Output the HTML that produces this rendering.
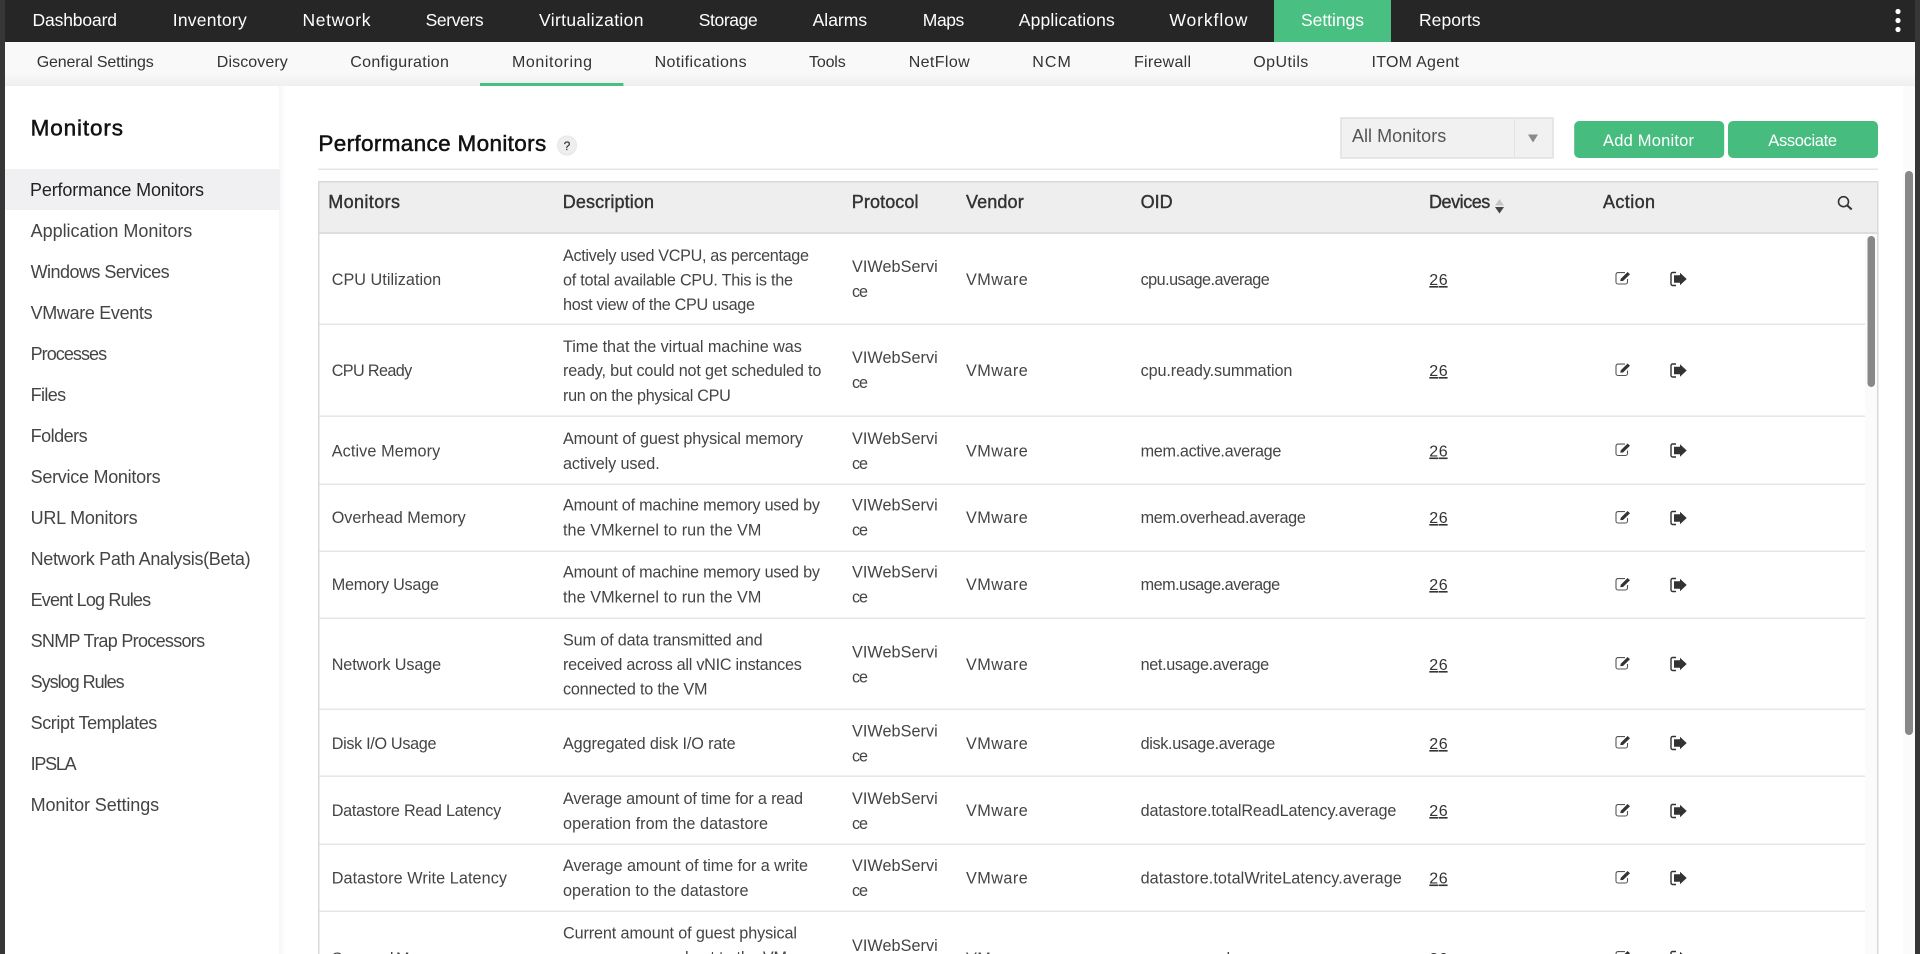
<!DOCTYPE html>
<html lang="en">
<head>
<meta charset="utf-8">
<title>Performance Monitors</title>
<style>
html,body{margin:0;padding:0;width:1920px;height:954px;overflow:hidden;background:#fff}
svg{display:block;position:absolute;left:0;top:0}
text{font-family:"Liberation Sans",sans-serif;white-space:pre}
.n{font-size:17.5px;fill:#fff}
.s{font-size:16px;fill:#333}
.m{font-size:18px;fill:#444}
.h{font-size:22.5px;fill:#111;stroke:#111;stroke-width:.5px}
.th{font-size:18px;fill:#333;stroke:#333;stroke-width:.4px}
.t{font-size:16.2px;fill:#444}
.d{font-size:16px;fill:#333}
.b{font-size:16.5px;fill:#fff}
</style>
</head>
<body>
<svg width="1920" height="954" viewBox="0 0 1920 954" xmlns="http://www.w3.org/2000/svg">
<defs>
<linearGradient id="sg" x1="0" y1="0" x2="0" y2="1"><stop offset="0" stop-color="#f9f9f9"/><stop offset=".7" stop-color="#f9f9f9"/><stop offset="1" stop-color="#efefef"/></linearGradient>
<linearGradient id="sd" x1="0" y1="0" x2="1" y2="0"><stop offset="0" stop-color="#f6f6f6"/><stop offset="1" stop-color="#fff"/></linearGradient>
<g id="ed">
<path d="M10 1.6H3A2 2 0 0 0 1 3.6V11a2 2 0 0 0 2 2h7.5a2 2 0 0 0 2-2V8" fill="none" stroke="#555" stroke-width="1.1"/>
<path d="M5.2 10.1L5.8 7.8 12.6 1 15 3.2 8 10z" fill="#333"/>
</g>
<g id="ar">
<path d="M6 1H2.6A1.6 1.6 0 0 0 1 2.6v9.8A1.6 1.6 0 0 0 2.6 14H6" fill="none" stroke="#333" stroke-width="1.4"/>
<path d="M4 3.8h6V1.2l6.7 6.3-6.7 6.3v-2.6H4z" fill="#333"/>
</g>
</defs>

<!-- window frame -->
<rect x="0" y="0" width="1920" height="954" fill="#fff"/>
<rect x="0" y="0" width="5" height="954" fill="#363636"/>
<rect x="1915" y="0" width="5" height="954" fill="#363636"/>
<!-- top nav -->
<rect x="5" y="0" width="1910" height="42" fill="#262626"/>
<rect x="1274" y="0" width="117" height="42" fill="#4abf82"/>
<text class="n" x="32.5" y="26" textLength="84.5">Dashboard</text>
<text class="n" x="172.7" y="26" textLength="74">Inventory</text>
<text class="n" x="302.5" y="26" textLength="68">Network</text>
<text class="n" x="425.6" y="26" textLength="58">Servers</text>
<text class="n" x="539" y="26" textLength="104.5">Virtualization</text>
<text class="n" x="698.7" y="26" textLength="59">Storage</text>
<text class="n" x="812.6" y="26" textLength="54.5">Alarms</text>
<text class="n" x="922.8" y="26" textLength="41.5">Maps</text>
<text class="n" x="1018.8" y="26" textLength="96">Applications</text>
<text class="n" x="1169.4" y="26" textLength="78">Workflow</text>
<text class="n" x="1301" y="26" textLength="63">Settings</text>
<text class="n" x="1419" y="26" textLength="61.5">Reports</text>
<circle cx="1898" cy="11.5" r="2.6" fill="#fff"/><circle cx="1898" cy="20.5" r="2.6" fill="#fff"/><circle cx="1898" cy="29.5" r="2.6" fill="#fff"/>

<!-- sub nav -->
<rect x="5" y="42" width="1910" height="44" fill="url(#sg)"/>
<text class="s" x="36.7" y="67" textLength="117">General Settings</text>
<text class="s" x="216.8" y="67" textLength="71">Discovery</text>
<text class="s" x="350.3" y="67" textLength="98.6">Configuration</text>
<text class="s" x="512" y="67" textLength="80">Monitoring</text>
<text class="s" x="654.6" y="67" textLength="92">Notifications</text>
<text class="s" x="809" y="67" textLength="36.7">Tools</text>
<text class="s" x="908.7" y="67" textLength="61">NetFlow</text>
<text class="s" x="1032.3" y="67" textLength="38.5">NCM</text>
<text class="s" x="1134" y="67" textLength="57">Firewall</text>
<text class="s" x="1253.3" y="67" textLength="55">OpUtils</text>
<text class="s" x="1371.5" y="67" textLength="87.5">ITOM Agent</text>
<rect x="480" y="83" width="143.4" height="3" fill="#4abf82"/>

<!-- sidebar -->
<rect x="279" y="86" width="6" height="868" fill="url(#sd)"/>
<text class="h" x="30.6" y="135.5" textLength="92.4">Monitors</text>
<rect x="5" y="169" width="275" height="41" fill="#f0f0f2"/>
<text class="m" x="30" y="196" textLength="174" style="fill:#222">Performance Monitors</text>
<text class="m" x="30.6" y="237" textLength="161.7">Application Monitors</text>
<text class="m" x="30.6" y="278" textLength="139">Windows Services</text>
<text class="m" x="30.6" y="319" textLength="122">VMware Events</text>
<text class="m" x="30.6" y="360" textLength="76.5">Processes</text>
<text class="m" x="30.6" y="401" textLength="35.5">Files</text>
<text class="m" x="30.6" y="442" textLength="57">Folders</text>
<text class="m" x="30.6" y="483" textLength="130">Service Monitors</text>
<text class="m" x="30.6" y="524" textLength="107">URL Monitors</text>
<text class="m" x="30.6" y="565" textLength="220">Network Path Analysis(Beta)</text>
<text class="m" x="30.6" y="606" textLength="120.5">Event Log Rules</text>
<text class="m" x="30.6" y="647" textLength="174.5">SNMP Trap Processors</text>
<text class="m" x="30.6" y="688" textLength="94">Syslog Rules</text>
<text class="m" x="30.6" y="729" textLength="126.7">Script Templates</text>
<text class="m" x="30.6" y="770" textLength="46">IPSLA</text>
<text class="m" x="30.6" y="811" textLength="128.5">Monitor Settings</text>

<!-- heading -->
<text class="h" x="318.4" y="151" textLength="227.8">Performance Monitors</text>
<circle cx="567" cy="145.5" r="9.5" fill="#eee" stroke="#e6e6e6"/>
<text x="567" y="150" text-anchor="middle" style="font-size:12px;fill:#333;stroke:#333;stroke-width:.2px">?</text>

<!-- dropdown -->
<rect x="1341" y="118" width="212" height="40" fill="#f1f1f1" stroke="#e0e0e0" stroke-width="1.5"/>
<rect x="1514" y="118" width="1" height="40" fill="#e4e4e4"/>
<path d="M1528 134.5h10l-5 8z" fill="#8a8a8a"/>
<text class="m" x="1352" y="142" textLength="94.2" style="fill:#555">All Monitors</text>

<!-- buttons -->
<rect x="1574.2" y="121" width="150" height="37" rx="5" fill="#46bd7f"/>
<rect x="1728" y="121" width="150" height="37" rx="5" fill="#46bd7f"/>
<text class="b" x="1603" y="146" textLength="91">Add Monitor</text>
<text class="b" x="1768.3" y="146" textLength="68.7">Associate</text>

<rect x="318" y="168.5" width="1560" height="1.5" fill="#e5e5e5"/>

<!-- table frame -->
<rect x="1865" y="234" width="12" height="720" fill="#fbfbfb"/>
<rect x="318" y="181" width="1560" height="52" fill="#eee"/>
<rect x="318" y="181" width="1560" height="1.5" fill="#d9d9d9"/>
<rect x="318" y="232" width="1560" height="2" fill="#ddd"/>
<rect x="318" y="181" width="1.5" height="773" fill="#d9d9d9"/>
<rect x="1877" y="181" width="1.5" height="773" fill="#d9d9d9"/>

<!-- header cells -->
<text class="th" x="328.2" y="208" textLength="71.8">Monitors</text>
<text class="th" x="562.8" y="208" textLength="91.2">Description</text>
<text class="th" x="851.8" y="208" textLength="66.7">Protocol</text>
<text class="th" x="966" y="208" textLength="57.7">Vendor</text>
<text class="th" x="1140.6" y="208" textLength="32">OID</text>
<text class="th" x="1429" y="208" textLength="61.3">Devices</text>
<text class="th" x="1603" y="208" textLength="52">Action</text>
<path d="M1495 205.5l4.5-6.5 4.5 6.5z" fill="#c4c4c4"/>
<path d="M1495 207h9l-4.5 6.5z" fill="#444"/>
<circle cx="1843.5" cy="201.7" r="5" fill="none" stroke="#333" stroke-width="1.6"/>
<path d="M1847.3 205.5l4.4 4" stroke="#333" stroke-width="2.1" fill="none"/>

<!-- row lines -->
<g fill="#e6e6e6">
<rect x="319.5" y="323.5" width="1545.5" height="1.5"/>
<rect x="319.5" y="415.5" width="1545.5" height="1.5"/>
<rect x="319.5" y="483.5" width="1545.5" height="1.5"/>
<rect x="319.5" y="550.5" width="1545.5" height="1.5"/>
<rect x="319.5" y="617.5" width="1545.5" height="1.5"/>
<rect x="319.5" y="708.5" width="1545.5" height="1.5"/>
<rect x="319.5" y="775.5" width="1545.5" height="1.5"/>
<rect x="319.5" y="843.5" width="1545.5" height="1.5"/>
<rect x="319.5" y="910.5" width="1545.5" height="1.5"/>
</g>

<!-- row 1 -->
<text class="t" x="331.7" y="285" textLength="109.5">CPU Utilization</text>
<text class="t" x="563" y="261" textLength="246">Actively used VCPU, as percentage</text>
<text class="t" x="563" y="285.5" textLength="230">of total available CPU. This is the</text>
<text class="t" x="563" y="310" textLength="192">host view of the CPU usage</text>
<text class="t" x="852" y="272" textLength="85.7">VIWebServi</text>
<text class="t" x="852" y="297" textLength="16">ce</text>
<text class="t" x="966" y="285" textLength="61.8">VMware</text>
<text class="t" x="1140.6" y="285" textLength="129.2">cpu.usage.average</text>
<text class="d" x="1429.3" y="285" textLength="18.3" text-decoration="underline">26</text>
<use href="#ed" x="1615" y="271"/><use href="#ar" x="1670" y="271.5"/>

<!-- row 2 -->
<text class="t" x="331.7" y="376" textLength="80.5">CPU Ready</text>
<text class="t" x="563" y="352" textLength="238.8">Time that the virtual machine was</text>
<text class="t" x="563" y="376" textLength="258.4">ready, but could not get scheduled to</text>
<text class="t" x="563" y="401" textLength="167.8">run on the physical CPU</text>
<text class="t" x="852" y="363" textLength="85.7">VIWebServi</text>
<text class="t" x="852" y="388" textLength="16">ce</text>
<text class="t" x="966" y="376" textLength="61.8">VMware</text>
<text class="t" x="1140.6" y="376" textLength="151.8">cpu.ready.summation</text>
<text class="d" x="1429.3" y="376" textLength="18.3" text-decoration="underline">26</text>
<use href="#ed" x="1615" y="362.5"/><use href="#ar" x="1670" y="363"/>

<!-- row 3 -->
<text class="t" x="331.7" y="456.5" textLength="108.5">Active Memory</text>
<text class="t" x="563" y="444" textLength="240">Amount of guest physical memory</text>
<text class="t" x="563" y="469" textLength="96.7">actively used.</text>
<text class="t" x="852" y="444" textLength="85.7">VIWebServi</text>
<text class="t" x="852" y="469" textLength="16">ce</text>
<text class="t" x="966" y="456.5" textLength="61.8">VMware</text>
<text class="t" x="1140.6" y="456.5" textLength="140.8">mem.active.average</text>
<text class="d" x="1429.3" y="456.5" textLength="18.3" text-decoration="underline">26</text>
<use href="#ed" x="1615" y="442.5"/><use href="#ar" x="1670" y="443"/>

<!-- row 4 -->
<text class="t" x="331.7" y="523" textLength="134">Overhead Memory</text>
<text class="t" x="563" y="510.5" textLength="257">Amount of machine memory used by</text>
<text class="t" x="563" y="535.5" textLength="198.4">the VMkernel to run the VM</text>
<text class="t" x="852" y="510.5" textLength="85.7">VIWebServi</text>
<text class="t" x="852" y="535.5" textLength="16">ce</text>
<text class="t" x="966" y="523" textLength="61.8">VMware</text>
<text class="t" x="1140.6" y="523" textLength="165.3">mem.overhead.average</text>
<text class="d" x="1429.3" y="523" textLength="18.3" text-decoration="underline">26</text>
<use href="#ed" x="1615" y="510"/><use href="#ar" x="1670" y="510.5"/>

<!-- row 5 -->
<text class="t" x="331.7" y="590" textLength="107.3">Memory Usage</text>
<text class="t" x="563" y="577.5" textLength="257">Amount of machine memory used by</text>
<text class="t" x="563" y="602.5" textLength="198.4">the VMkernel to run the VM</text>
<text class="t" x="852" y="577.5" textLength="85.7">VIWebServi</text>
<text class="t" x="852" y="602.5" textLength="16">ce</text>
<text class="t" x="966" y="590" textLength="61.8">VMware</text>
<text class="t" x="1140.6" y="590" textLength="139.6">mem.usage.average</text>
<text class="d" x="1429.3" y="590" textLength="18.3" text-decoration="underline">26</text>
<use href="#ed" x="1615" y="577"/><use href="#ar" x="1670" y="577.5"/>

<!-- row 6 -->
<text class="t" x="331.7" y="670" textLength="109.5">Network Usage</text>
<text class="t" x="563" y="645.5" textLength="199.6">Sum of data transmitted and</text>
<text class="t" x="563" y="670" textLength="238.8">received across all vNIC instances</text>
<text class="t" x="563" y="694.5" textLength="144.5">connected to the VM</text>
<text class="t" x="852" y="657.5" textLength="85.7">VIWebServi</text>
<text class="t" x="852" y="682.5" textLength="16">ce</text>
<text class="t" x="966" y="670" textLength="61.8">VMware</text>
<text class="t" x="1140.6" y="670" textLength="128.6">net.usage.average</text>
<text class="d" x="1429.3" y="670" textLength="18.3" text-decoration="underline">26</text>
<use href="#ed" x="1615" y="656"/><use href="#ar" x="1670" y="656.5"/>

<!-- row 7 -->
<text class="t" x="331.7" y="749" textLength="104.8">Disk I/O Usage</text>
<text class="t" x="563" y="749" textLength="172.6">Aggregated disk I/O rate</text>
<text class="t" x="852" y="736.5" textLength="85.7">VIWebServi</text>
<text class="t" x="852" y="761.5" textLength="16">ce</text>
<text class="t" x="966" y="749" textLength="61.8">VMware</text>
<text class="t" x="1140.6" y="749" textLength="134.7">disk.usage.average</text>
<text class="d" x="1429.3" y="749" textLength="18.3" text-decoration="underline">26</text>
<use href="#ed" x="1615" y="735"/><use href="#ar" x="1670" y="735.5"/>

<!-- row 8 -->
<text class="t" x="331.7" y="816" textLength="169.5">Datastore Read Latency</text>
<text class="t" x="563" y="804" textLength="240">Average amount of time for a read</text>
<text class="t" x="563" y="829" textLength="205">operation from the datastore</text>
<text class="t" x="852" y="804" textLength="85.7">VIWebServi</text>
<text class="t" x="852" y="829" textLength="16">ce</text>
<text class="t" x="966" y="816" textLength="61.8">VMware</text>
<text class="t" x="1140.6" y="816" textLength="255.8">datastore.totalReadLatency.average</text>
<text class="d" x="1429.3" y="816" textLength="18.3" text-decoration="underline">26</text>
<use href="#ed" x="1615" y="803"/><use href="#ar" x="1670" y="803.5"/>

<!-- row 9 -->
<text class="t" x="331.7" y="883.5" textLength="175.3">Datastore Write Latency</text>
<text class="t" x="563" y="871" textLength="245">Average amount of time for a write</text>
<text class="t" x="563" y="896" textLength="185.5">operation to the datastore</text>
<text class="t" x="852" y="871" textLength="85.7">VIWebServi</text>
<text class="t" x="852" y="896" textLength="16">ce</text>
<text class="t" x="966" y="883.5" textLength="61.8">VMware</text>
<text class="t" x="1140.6" y="883.5" textLength="261.2">datastore.totalWriteLatency.average</text>
<text class="d" x="1429.3" y="883.5" textLength="18.3" text-decoration="underline">26</text>
<use href="#ed" x="1615" y="870"/><use href="#ar" x="1670" y="870.5"/>

<!-- row 10 (clipped) -->
<text class="t" x="331.7" y="964" textLength="118">Swapped Memory</text>
<text class="t" x="563" y="938.5" textLength="234">Current amount of guest physical</text>
<text class="t" x="563" y="963" textLength="224">memory swapped out to the VM</text>
<text class="t" x="852" y="951" textLength="85.7">VIWebServi</text>
<text class="t" x="966" y="964" textLength="61.8">VMware</text>
<text class="t" x="1140.6" y="964" textLength="140">mem.swapped.average</text>
<text class="d" x="1429.3" y="964" textLength="18.3" text-decoration="underline">26</text>
<use href="#ed" x="1615" y="950"/><use href="#ar" x="1670" y="950.5"/>

<!-- scrollbars -->
<rect x="1867.5" y="236" width="7.5" height="151" rx="3.7" fill="#888"/>
<rect x="1903" y="86" width="12" height="868" fill="#fbfbfb"/>
<rect x="1905" y="171" width="8" height="564" rx="4" fill="#888"/>
</svg>
</body>
</html>
